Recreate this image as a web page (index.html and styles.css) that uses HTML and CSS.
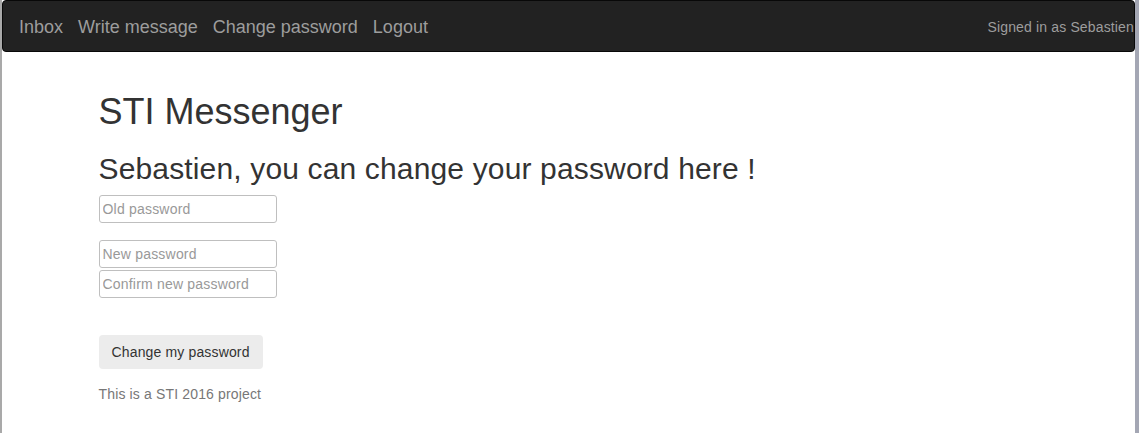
FILE: index.html
```html
<!DOCTYPE html>
<html lang="en">
<head>
<meta charset="utf-8">
<title>STI Messenger - Change password</title>
<link rel="stylesheet" href="styles.css">
</head>
<body>
<div class="window">
  <nav class="navbar">
    <ul class="nav-links">
      <li><a href="#">Inbox</a></li>
      <li><a href="#">Write message</a></li>
      <li><a href="#">Change password</a></li>
      <li><a href="#">Logout</a></li>
    </ul>
    <p class="navbar-text">Signed in as Sebastien</p>
  </nav>
  <main class="container">
    <h1>STI Messenger</h1>
    <h2>Sebastien, you can change your password here !</h2>
    <form class="pw-form">
      <input class="field field-old" type="password" placeholder="Old password">
      <input class="field field-new" type="password" placeholder="New password">
      <input class="field field-confirm" type="password" placeholder="Confirm new password">
      <button class="btn" type="button">Change my password</button>
    </form>
    <p class="footer-text">This is a STI 2016 project</p>
  </main>
</div>
</body>
</html>
```

FILE: styles.css
```css
html, body {
  margin: 0;
  padding: 0;
  background: #ffffff;
}

body {
  font-family: "Liberation Sans", Arial, sans-serif;
  font-size: 14px;
  line-height: 1.42857;
  letter-spacing: 0.15px;
  color: #333333;
}

.window {
  box-sizing: border-box;
  min-height: 100vh;
  border-left: 2px solid #a9a9a9;
  border-right: 4px solid #a4a7b4;
  overflow: hidden;
}

.navbar {
  display: flex;
  justify-content: space-between;
  align-items: flex-start;
  height: 50px;
  margin: 0;
  background: #222222;
  border: 1px solid #080808;
  border-radius: 4px;
}

.nav-links {
  display: flex;
  gap: 15px;
  list-style: none;
  margin: 0;
  padding: 0 0 0 16px;
  letter-spacing: 0;
}

.nav-links a {
  display: block;
  padding: 16px 0 14px;
  font-size: 18px;
  line-height: 20px;
  color: #9d9d9d;
  text-decoration: none;
}

.navbar-text {
  margin: 16px 0 0;
  font-size: 14px;
  line-height: 20px;
  color: #9d9d9d;
  white-space: nowrap;
}

.container {
  box-sizing: border-box;
  max-width: 970px;
  margin: 0 auto;
  padding: 20px 15px 0;
}

h1 {
  margin: 20px 0 10px;
  font-size: 36px;
  font-weight: 500;
  line-height: 1.1;
  letter-spacing: 0;
  color: #333333;
}

h2 {
  margin: 20px 0 10px;
  font-size: 30px;
  font-weight: 500;
  line-height: 1.1;
  letter-spacing: 0.15px;
  color: #333333;
}

.pw-form {
  display: flex;
  flex-direction: column;
  align-items: flex-start;
}

.field {
  box-sizing: border-box;
  width: 178px;
  height: 28px;
  padding: 0 3px;
  font-family: "Liberation Sans", Arial, sans-serif;
  font-size: 14px;
  letter-spacing: 0.2px;
  color: #333333;
  background: #ffffff;
  border: 1px solid #bfbfbf;
  border-radius: 3px;
  outline: none;
}

.field::placeholder {
  color: #999999;
}

.field-old {
  margin-bottom: 17px;
}

.field-new {
  margin-bottom: 2px;
}

.field-confirm {
  margin-bottom: 37px;
}

.btn {
  box-sizing: border-box;
  height: 34px;
  padding: 6px 12px;
  font-family: "Liberation Sans", Arial, sans-serif;
  font-size: 14px;
  line-height: 20px;
  letter-spacing: 0.15px;
  color: #333333;
  background: #ececec;
  border: 1px solid transparent;
  border-radius: 4px;
}

.footer-text {
  margin: 16px 0 0;
  color: #777777;
}
```
